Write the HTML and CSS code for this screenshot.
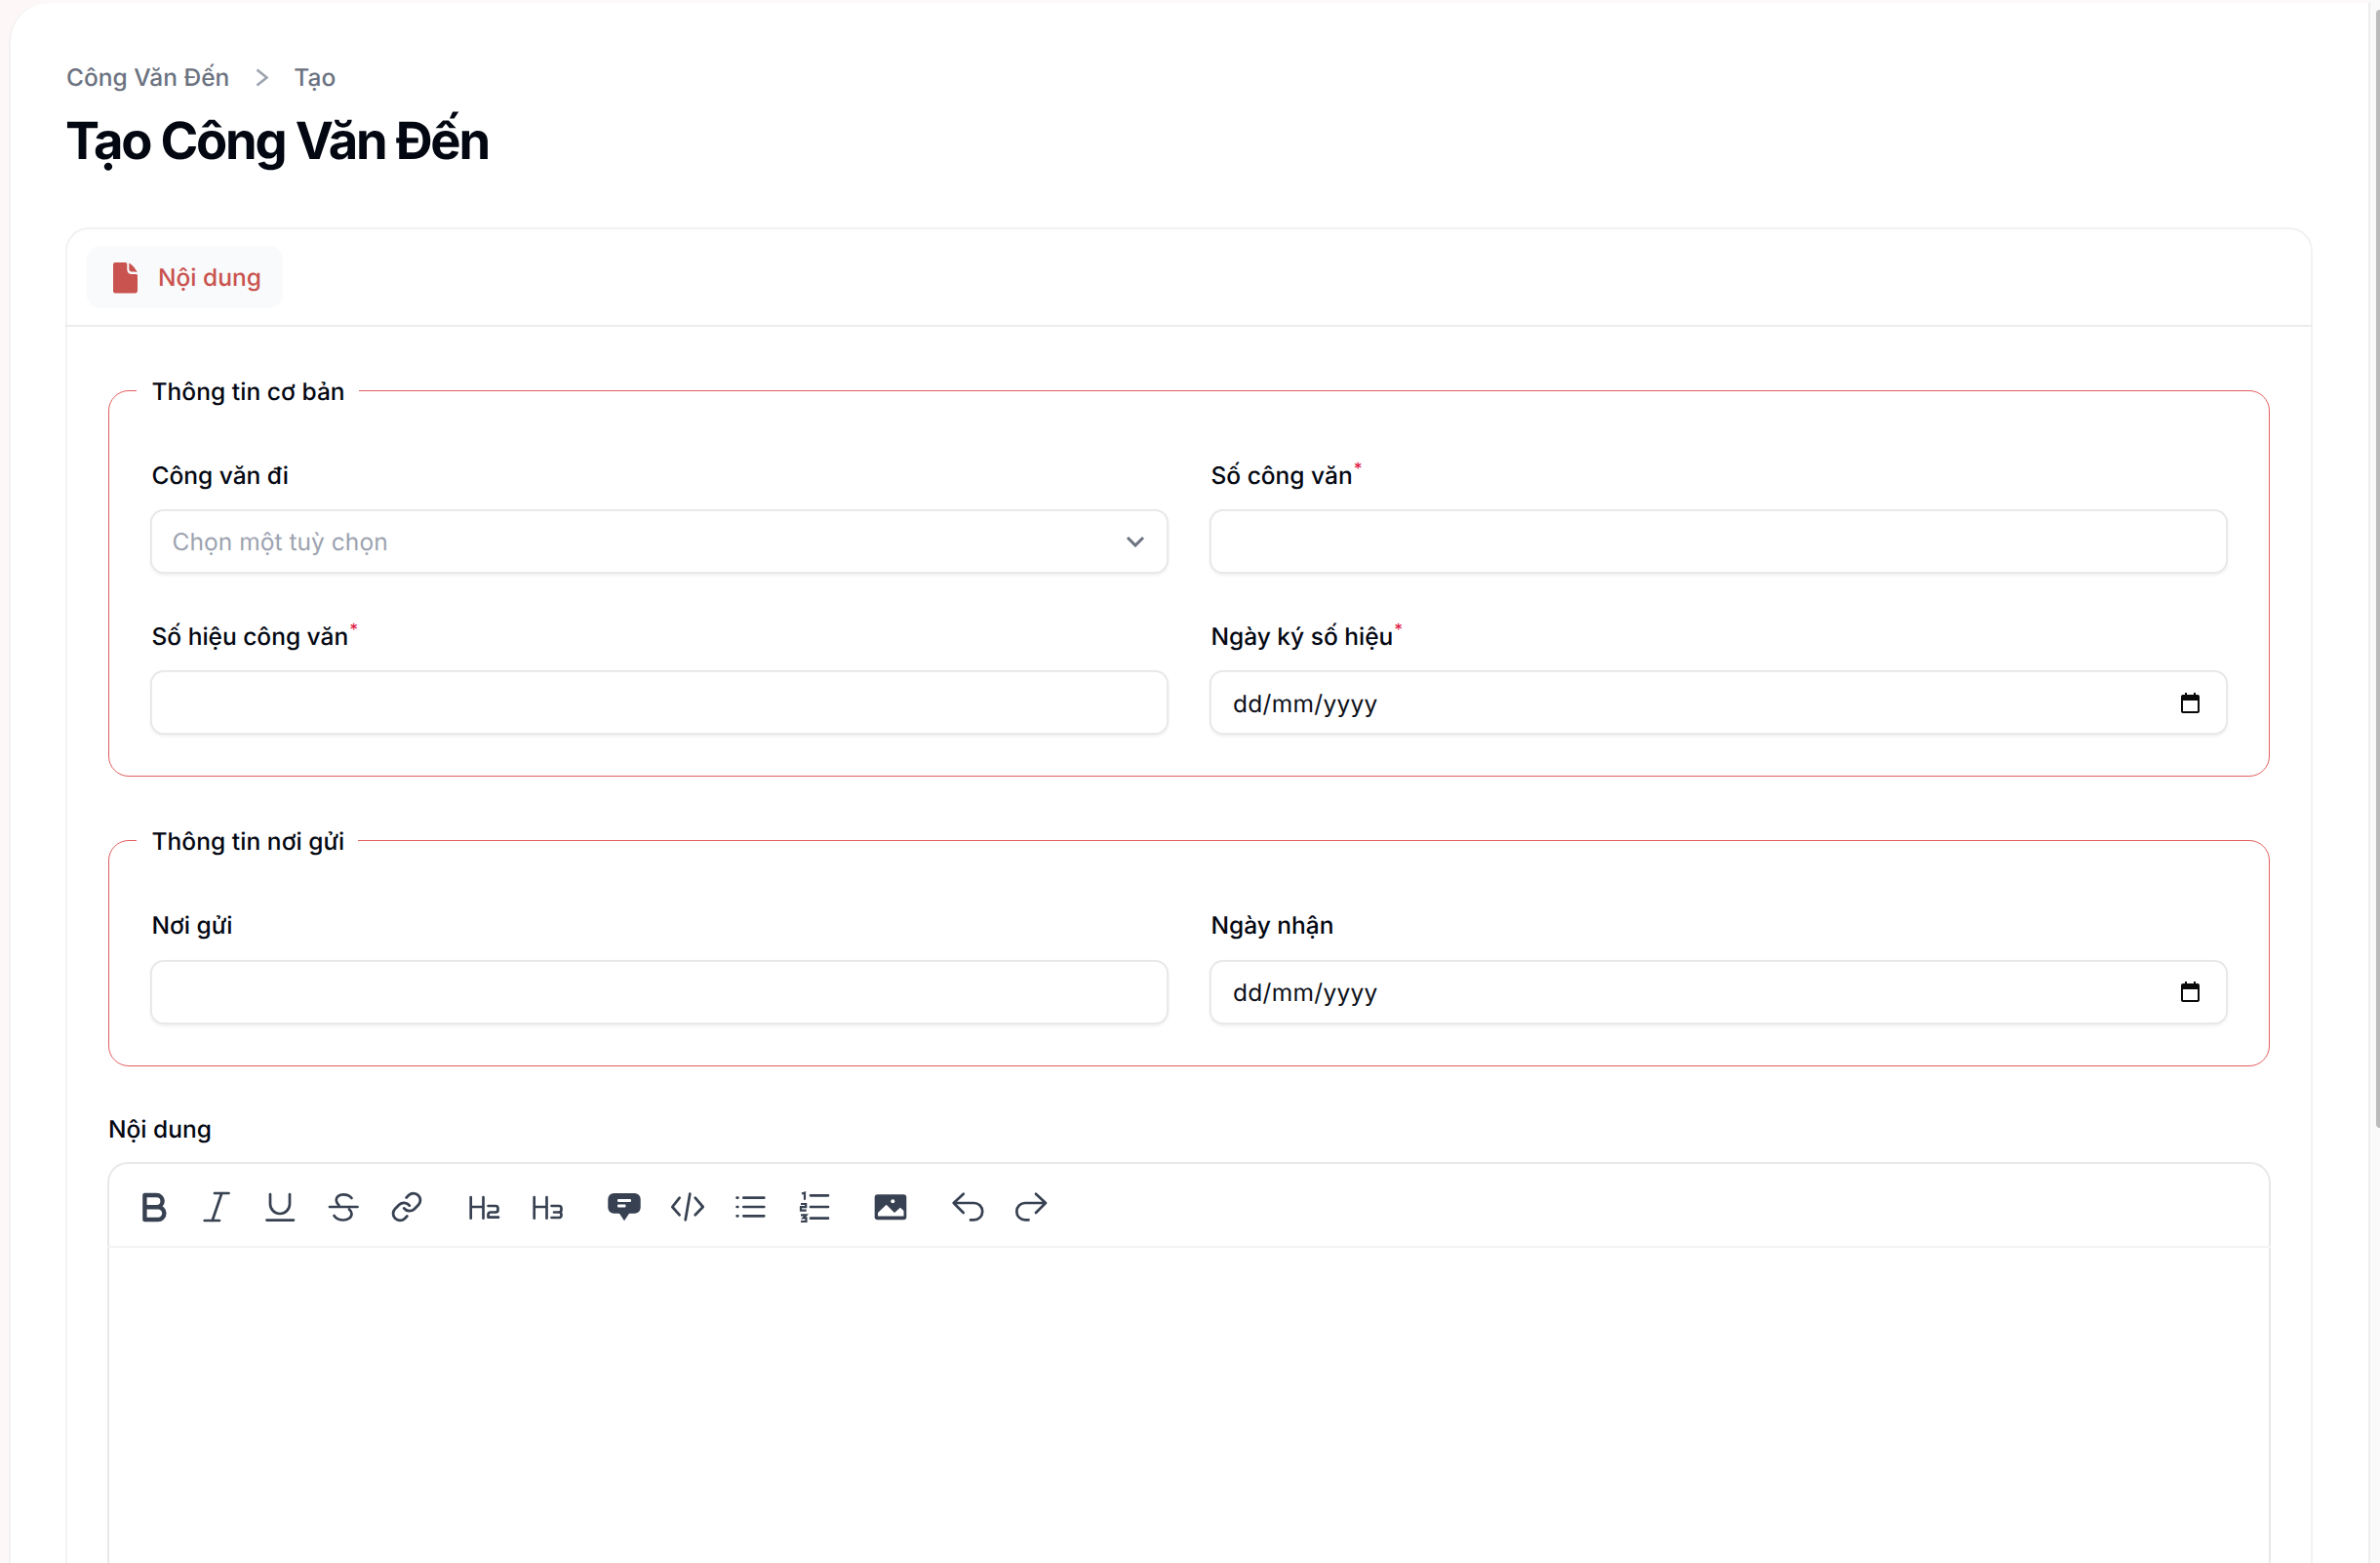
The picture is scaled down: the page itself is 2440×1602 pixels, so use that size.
FILE: index.html
```html
<!DOCTYPE html>
<html lang="vi">
<head>
<meta charset="utf-8">
<title>Tạo Công Văn Đến</title>
<link rel="stylesheet" href="styles.css">
</head>
<body>
<main class="panel">
  <nav class="crumbs">
    <span>Công Văn Đến</span>
    <svg class="crumb-sep" viewBox="0 0 35 35"><path d="M12.5 9.5L22.5 17.5L12.5 25.5"/></svg>
    <span>Tạo</span>
  </nav>
  <h1 class="title">Tạo Công Văn Đến</h1>
  <section class="card">
    <div class="tabs">
      <div class="tab">
        <svg class="tab-icon" viewBox="0 0 35 35"><path d="M7 2H17.5C18.6 2 19.3 2.8 19.3 3.8V9.5C19.3 12 21.3 14 23.8 14H28.5C29.5 14 30 14.8 30 15.7V31C30 32.4 29 33.4 27.6 33.4H7C5.8 33.4 5 32.4 5 31V4.2C5 3 5.8 2 7 2Z"/><path d="M21.3 2.5C24.6 4.4 28 8.2 29.6 12C27.6 11.6 25.6 11.8 23.8 11.6C22.4 11.4 21.3 10.2 21.3 8.7Z"/></svg>
        <span>Nội dung</span>
      </div>
    </div>
    <div class="card-body">
      <fieldset class="group">
        <legend class="legend">Thông tin cơ bản</legend>
        <div class="grid">
          <div class="field">
            <label class="label">Công văn đi</label>
            <div class="control select">
              <span class="placeholder">Chọn một tuỳ chọn</span>
              <svg class="chevron" viewBox="0 0 20 12"><path d="M2 2L10 10L18 2"/></svg>
            </div>
          </div>
          <div class="field">
            <label class="label">Số công văn<span class="req">*</span></label>
            <div class="control"><input class="input" type="text"></div>
          </div>
          <div class="field">
            <label class="label">Số hiệu công văn<span class="req">*</span></label>
            <div class="control"><input class="input" type="text"></div>
          </div>
          <div class="field">
            <label class="label">Ngày ký số hiệu<span class="req">*</span></label>
            <div class="control date">
              <span class="date-text">dd/mm/yyyy</span>
              <svg class="cal" viewBox="0 0 19 21"><path d="M4 0H6V2H13V0H15V2H17C18.1 2 19 2.9 19 4V19C19 20.1 18.1 21 17 21H2C0.9 21 0 20.1 0 19V4C0 2.9 0.9 2 2 2H4ZM2 8V19H17V8Z"/></svg>
            </div>
          </div>
        </div>
      </fieldset>
      <fieldset class="group">
        <legend class="legend">Thông tin nơi gửi</legend>
        <div class="grid">
          <div class="field">
            <label class="label">Nơi gửi</label>
            <div class="control"><input class="input" type="text"></div>
          </div>
          <div class="field">
            <label class="label">Ngày nhận</label>
            <div class="control date">
              <span class="date-text">dd/mm/yyyy</span>
              <svg class="cal" viewBox="0 0 19 21"><path d="M4 0H6V2H13V0H15V2H17C18.1 2 19 2.9 19 4V19C19 20.1 18.1 21 17 21H2C0.9 21 0 20.1 0 19V4C0 2.9 0.9 2 2 2H4ZM2 8V19H17V8Z"/></svg>
            </div>
          </div>
        </div>
      </fieldset>
      <div class="editor-field">
        <label class="label editor-label">Nội dung</label>
        <div class="editor">
          <div class="toolbar">
            <div class="tool-group">
              <svg class="tool bold" viewBox="0 0 42 42"><path d="M12.4 9H24.5a6.1 6.1 0 0 1 0 12.2H12.4ZM12.4 21.2H26a6.4 6.4 0 0 1 0 12.8H12.4Z"/></svg>
              <svg class="tool" viewBox="0 0 42 42"><path d="M19 7H33.5M8.7 35H24M26.3 7L16.7 35"/></svg>
              <svg class="tool" viewBox="0 0 42 42"><path d="M11 8V18a10 10 0 0 0 20 0V8M7.5 34.6H35"/></svg>
              <svg class="tool" viewBox="0 0 42 42"><path d="M7 21H35.5M29.5 12C27.5 9.3 24 8.3 21 8.3C17 8.3 13.7 10.5 13.7 14C13.7 16.5 15 18 16.5 19.5M27 23.5C28.7 25 29.5 26.3 29.5 28C29.5 32 25.5 34.5 21 34.5C17 34.5 13.5 33 11.5 30"/></svg>
              <svg class="tool link" viewBox="-3 -3 30 30"><path d="M10 13a5 5 0 0 0 7.54.54l3-3a5 5 0 0 0-7.07-7.07l-1.72 1.71"/><path d="M14 11a5 5 0 0 0-7.54-.54l-3 3a5 5 0 0 0 7.07 7.07l1.71-1.71"/></svg>
            </div>
            <div class="tool-group">
              <svg class="tool" viewBox="0 0 42 42"><path d="M7.7 11V32.7M20.5 11V32.7M7.7 21H20.5M25.5 20H33a2.5 2.5 0 0 1 2.5 2.5V24a2.5 2.5 0 0 1-2.5 2.5H28a2.5 2.5 0 0 0-2.5 2.5V31.7H36"/></svg>
              <svg class="tool" viewBox="0 0 42 42"><path d="M7.7 11V32.7M20.5 11V32.7M7.7 21H20.5M25.5 20H33a2.5 2.5 0 0 1 2.5 2.5V24a2.5 2.5 0 0 1-2.5 2.5H28M33 26.5a2.5 2.5 0 0 1 2.5 2.5V30a2.5 2.5 0 0 1-2.5 2H25.5"/></svg>
            </div>
            <div class="tool-group tight">
              <svg class="tool solid" viewBox="0 0 42 42"><rect x="4.3" y="7" width="33.4" height="20.7" rx="6"/><path d="M15.5 27H26.5L21 35.3Z"/><rect class="cut" x="14" y="13" width="14" height="3" rx="1"/><rect class="cut" x="14" y="18.5" width="8.5" height="3" rx="1"/></svg>
              <svg class="tool" viewBox="0 0 42 42"><path d="M12.7 11.7L5.3 21L12.7 29.3M23.3 7.7L18.7 34.3M28.7 11.7L36.7 21L28.7 29.3"/></svg>
              <svg class="tool" viewBox="0 0 42 42"><path d="M14.3 11.7H35.3M14.3 21H35.3M14.3 30.3H35.3M7.6 11.7H8.4M7.6 21H8.4M7.6 30.3H8.4"/></svg>
              <svg class="tool" viewBox="0 0 42 42"><path d="M18 9.3H36M18 21H36M18 32.7H36"/><path class="thin" d="M9 7.5L12 6.5V13.7M8 18H13.2V21.2H8V24.6H13.7M8 29.3H13.5L10.6 32.3H13.5V36H8"/></svg>
            </div>
            <div class="tool-group">
              <svg class="tool solid" viewBox="0 0 42 42"><rect x="4.7" y="8.3" width="32.6" height="26" rx="3"/><path class="cut" d="M8 30.5V27L16.7 18.7L25 27L31 21.7L34.5 25V30.5Z"/><circle class="cut" cx="23.3" cy="15.3" r="2"/></svg>
            </div>
            <div class="tool-group">
              <svg class="tool" viewBox="0 0 42 42"><path d="M16.7 7.7L6.7 17L16.7 27M6.7 17H27.5a8.7 8.7 0 0 1 0 17.4H24"/></svg>
              <svg class="tool" viewBox="0 0 42 42"><path d="M26 7.7L36 17L26 27M36 17H15a8.7 8.7 0 0 0 0 17.4H18.5"/></svg>
            </div>
          </div>
          <div class="editor-area"></div>
        </div>
      </div>
    </div>
  </section>
</main>
<aside class="scrollbar"><div class="thumb"></div></aside>
</body>
</html>
```
FILE: styles.css
```css
* { box-sizing: border-box; }
html, body { height: 100%; }
body {
  margin: 0;
  display: flex;
  overflow: hidden;
  background: #fdf7f7;
  font-family: Inter, "Noto Sans", sans-serif;
  font-size: 24.5px;
  line-height: 35px;
  color: #030712;
  text-rendering: geometricPrecision;
}
.panel {
  flex: 1;
  min-width: 0;
  margin: 3px 0 0 9px;
  padding: 58.5px 57px 0 56px;
  background: #fff;
  border-left: 2px solid #f3f1f1;
  border-right: 2px solid #eeeeee;
  border-top-left-radius: 40px;
  overflow: hidden;
}
.crumbs {
  display: flex;
  align-items: center;
  gap: 15.5px;
  color: #6b7280;
  font-weight: 450;
  margin-left: 1px;
}
.crumb-sep { width: 35px; height: 35px; fill: none; stroke: #9ca3af; stroke-width: 2.6; }
.title {
  margin: 0;
  padding-top: 16px;
  font-size: 52.5px;
  line-height: 63px;
  font-weight: 700;
  letter-spacing: -0.042em;
  color: #030712;
}
.card {
  margin-top: 57.5px;
  background: #fff;
  border-radius: 24px;
  box-shadow: inset 0 0 0 2px #f2f2f3;
}
.tabs {
  display: flex;
  height: 102px;
  padding: 19px 22px 17px;
  border-bottom: 2px solid #ececed;
}
.tab {
  display: flex;
  align-items: center;
  gap: 16px;
  width: 201px;
  padding: 0 22px;
  border-radius: 14px;
  background: #f9fafb;
  color: #c9534f;
  font-weight: 450;
}
.tab-icon { width: 35px; height: 35px; flex: none; fill: #c9534f; }
.card-body { padding: 46.5px 44px 0; }
.group {
  display: block;
  min-width: 0;
  margin: 0 0 47px;
  padding: 51px 42px 42px;
  border: 1px solid #e35f5f;
  border-radius: 21px;
}
.legend { margin-left: -14px; padding: 2px 14px 0 15.5px; font-weight: 450; letter-spacing: 0.06px; }
.grid {
  display: grid;
  grid-template-columns: 1fr 1fr;
  column-gap: 42px;
  row-gap: 46.5px;
}
.label { display: block; font-weight: 450; margin-bottom: 17.5px; padding-left: 1.5px; }
.editor-label { padding-left: 0; margin-bottom: 16.5px; }
.req {
  display: inline-block;
  vertical-align: 10px;
  margin-left: 1px;
  font-size: 17px;
  line-height: 1;
  color: #e11d48;
}
.control {
  display: flex;
  align-items: center;
  justify-content: space-between;
  height: 66px;
  padding: 0 21px;
  border-radius: 14px;
  background: #fff;
  box-shadow: inset 0 0 0 1.75px #e6e6e7, 0 1.75px 3px rgba(0, 0, 0, 0.06);
}
.select { padding-left: 22.5px; }
.placeholder { color: #9ca3af; font-size: 24.5px; letter-spacing: 0.05px; }
.chevron { width: 20px; height: 12px; margin-right: 3px; fill: none; stroke: #6b7280; stroke-width: 3; }
.input {
  flex: 1;
  min-width: 0;
  border: 0;
  outline: 0;
  background: transparent;
  font: inherit;
}
.date { padding: 0 29px 0 24px; color: #0b0f19; }
.date-text { padding-top: 2px; letter-spacing: 0.3px; }
.cal { width: 19px; height: 21px; fill: #0a0a0a; }
.editor-field { margin-top: 4px; }
.editor {
  margin: 0 -1px;
  height: 700px;
  border-radius: 21px;
  box-shadow: inset 0 0 0 2px #e8e8e9;
}
.toolbar {
  display: flex;
  align-items: center;
  gap: 37px;
  height: 88px;
  padding: 5px 26px 0;
  border-bottom: 2px solid #f3f4f6;
}
.tool-group { display: flex; gap: 23px; }
.tight { gap: 22.5px; }
.tool {
  width: 42px;
  height: 42px;
  display: block;
  fill: none;
  stroke: #374151;
  stroke-width: 2.7;
  stroke-linecap: round;
  stroke-linejoin: round;
}
.bold { stroke-width: 4.4; }
.link { stroke-width: 2; }
.thin { stroke-width: 2.2; stroke-linecap: butt; stroke-linejoin: miter; }
.solid { fill: #374151; stroke: none; }
.cut { fill: #fff; }
.scrollbar { flex: none; width: 10px; padding: 10px 0 0 6px; background: #fafafa; }
.thumb { height: 1146px; background: #bbbbbb; border-radius: 5px 0 0 5px; }
```
